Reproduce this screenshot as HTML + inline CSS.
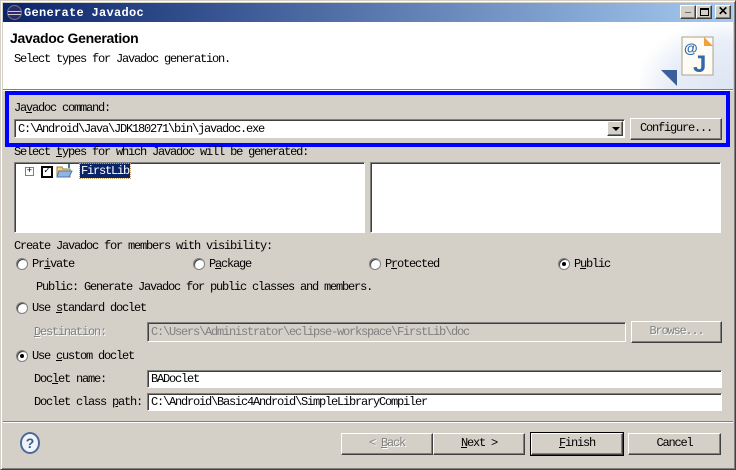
<!DOCTYPE html>
<html><head><style>
*{margin:0;padding:0;box-sizing:border-box}
body{width:736px;height:470px;background:#d4d0c8;position:relative;overflow:hidden;font-family:"Liberation Mono",monospace;font-size:12px;letter-spacing:-1.2px;color:#000}
.a{position:absolute;white-space:nowrap;line-height:14px}
.f{position:absolute;background:#fff;border:1px solid;border-color:#808080 #fff #fff #808080;box-shadow:inset 1px 1px 0 #404040;padding:2px 0 0 3px;line-height:14px;white-space:nowrap}
.b{position:absolute;background:#d4d0c8;border:1px solid;border-color:#fff #404040 #404040 #fff;box-shadow:inset -1px -1px 0 #808080;text-align:center;line-height:19px}
.r{position:absolute;width:12px;height:12px;border-radius:50%;background:#fff;border:1px solid #808080;box-shadow:inset 1px 1px 0 #404040}
.r.on::after{content:"";position:absolute;left:3px;top:3px;width:4px;height:4px;border-radius:50%;background:#000}
u{text-decoration:underline}
</style></head><body>
<div style="position:absolute;left:0;top:0;width:736px;height:470px;border:1px solid;border-color:#d4d0c8 #404040 #404040 #d4d0c8;box-shadow:inset 1px 1px 0 #fff,inset -1px -1px 0 #808080"></div>
<div style="position:absolute;left:3px;top:3px;width:730px;height:19px;background:linear-gradient(90deg,#0a246a,#a6caf0)"></div>
<div style="position:absolute;left:7px;top:5px;width:15px;height:15px;border-radius:50%;background:#2c2c6c;border:1px solid #777"><div style="position:absolute;left:0;top:5px;width:13px;height:1px;background:#ccc"></div><div style="position:absolute;left:0;top:8px;width:13px;height:1px;background:#ccc"></div></div>
<div class="a" style="left:24px;top:6px;color:#fff;font-weight:bold;font-size:12px;letter-spacing:0.3px">Generate Javadoc</div>
<div class="b" style="left:680px;top:5px;width:16px;height:14px;line-height:10px;font-size:10px;letter-spacing:0">_</div>
<div class="b" style="left:696px;top:5px;width:16px;height:14px"><div style="position:absolute;left:3px;top:2px;width:9px;height:8px;border:1px solid #000;border-top-width:2px"></div></div>
<div class="b" style="left:715px;top:5px;width:16px;height:14px;line-height:11px;font-size:12px;font-weight:bold;letter-spacing:0;font-family:'Liberation Sans',sans-serif">✕</div>
<div style="position:absolute;left:3px;top:22px;width:730px;height:67px;background:#fff"></div>
<div style="position:absolute;left:640px;top:22px;width:93px;height:67px;background:radial-gradient(ellipse at 100% 100%,#dde5f3 0,#e9eef8 50%,#fff 75%)"></div>
<div class="a" style="left:10px;top:31px;font-family:'Liberation Sans',sans-serif;font-weight:bold;font-size:14px;letter-spacing:-0.3px">Javadoc Generation</div>
<div class="a" style="left:14px;top:52px">Select types for Javadoc generation.</div>
<svg style="position:absolute;left:660px;top:36px" width="56" height="50"><polygon points="1,34 17,34 17,50" fill="#3a5f9a"/><rect x="22" y="1" width="31" height="38" fill="#fdfbf3" stroke="#a9a48d"/><polygon points="44,1 53,10 44,10" fill="#f0a040"/><text x="24" y="17" font-family="Liberation Sans" font-size="14" font-weight="bold" fill="#2a68b0">@</text><text x="33" y="36" font-family="Liberation Sans" font-size="24" font-weight="bold" fill="#3568a8">J</text></svg>
<div style="position:absolute;left:3px;top:89px;width:730px;height:1px;background:#808080"></div>
<div style="position:absolute;left:3px;top:90px;width:730px;height:1px;background:#fff"></div>
<div style="position:absolute;left:5px;top:91px;width:725px;height:56px;border:4px solid #0000ff"></div>
<div class="a" style="left:14px;top:101px">Ja<u>v</u>adoc command:</div>
<div class="f" style="left:14px;top:119px;width:611px;height:19px">C:\Android\Java\JDK180271\bin\javadoc.exe</div>
<div class="b" style="left:607px;top:121px;width:16px;height:15px"><div style="position:absolute;left:4px;top:5px;border:4px solid transparent;border-top:4px solid #000;border-bottom:0"></div></div>
<div class="b" style="left:630px;top:118px;width:92px;height:22px">Configure...</div>
<div class="a" style="left:14px;top:145px">Select <u>t</u>ypes for which Javadoc will be generated:</div>
<div class="f" style="left:14px;top:162px;width:351px;height:71px"></div>
<div class="f" style="left:370px;top:162px;width:351px;height:71px"></div>
<div style="position:absolute;left:25px;top:167px;width:9px;height:9px;border:1px solid #808080;background:#fff;font-size:9px;line-height:7px;text-align:center;letter-spacing:0">+</div>
<div style="position:absolute;left:41px;top:166px;width:12px;height:12px;border:2px solid #000;background:#fff;font-size:10px;line-height:8px;text-align:center;letter-spacing:0">✓</div>
<svg style="position:absolute;left:56px;top:163px" width="17" height="16"><path d="M1 4h5l1 2h7v8H1z" fill="#f4d27a" stroke="#a08040"/><path d="M3 8h13l-3 6H1z" fill="#8fb5e0" stroke="#4a78b0"/><path d="M13 1v4" stroke="#4a78b0" stroke-width="2"/></svg>
<div class="a" style="left:80px;top:164px;background:#0a246a;color:#fff;outline:1px dotted #c0a060;padding:0 1px">FirstLib</div>
<div class="a" style="left:14px;top:239px">Create Javadoc for members with visibility:</div>
<div class="r" style="left:16px;top:258px"></div><div class="a" style="left:32px;top:257px">Pr<u>i</u>vate</div>
<div class="r" style="left:193px;top:258px"></div><div class="a" style="left:209px;top:257px">P<u>a</u>ckage</div>
<div class="r" style="left:369px;top:258px"></div><div class="a" style="left:385px;top:257px">P<u>r</u>otected</div>
<div class="r on" style="left:558px;top:258px"></div><div class="a" style="left:574px;top:257px">P<u>u</u>blic</div>
<div class="a" style="left:36px;top:280px">Public: Generate Javadoc for public classes and members.</div>
<div class="r" style="left:16px;top:302px"></div><div class="a" style="left:32px;top:301px">Use <u>s</u>tandard doclet</div>
<div class="a" style="left:34px;top:325px;color:#808080;text-shadow:1px 1px 0 #fff"><u>D</u>estination:</div>
<div class="f" style="left:147px;top:322px;width:479px;height:20px;background:#d4d0c8;color:#808080">C:\Users\Administrator\eclipse-workspace\FirstLib\doc</div>
<div class="b" style="left:631px;top:321px;width:91px;height:22px;color:#808080;text-shadow:1px 1px 0 #fff">Browse...</div>
<div class="r on" style="left:16px;top:350px"></div><div class="a" style="left:32px;top:349px">Use <u>c</u>ustom doclet</div>
<div class="a" style="left:34px;top:372px">Doc<u>l</u>et name:</div>
<div class="f" style="left:147px;top:370px;width:575px;height:18px;padding-top:1px">BADoclet</div>
<div class="a" style="left:34px;top:395px">Doclet class <u>p</u>ath:</div>
<div class="f" style="left:147px;top:393px;width:575px;height:18px;padding-top:1px">C:\Android\Basic4Android\SimpleLibraryCompiler</div>
<div style="position:absolute;left:3px;top:421px;width:730px;height:1px;background:#808080"></div>
<div style="position:absolute;left:3px;top:422px;width:730px;height:1px;background:#fff"></div>
<div style="position:absolute;left:20px;top:432px;width:20px;height:22px;border-radius:50%;border:2px solid #4a6a9a;background:#f0f4fa;color:#3a5a8a;font:bold 14px/18px 'Liberation Sans',sans-serif;text-align:center;letter-spacing:0">?</div>
<div class="b" style="left:341px;top:433px;width:92px;height:22px;color:#808080;text-shadow:1px 1px 0 #fff">&lt; <u>B</u>ack</div>
<div class="b" style="left:433px;top:433px;width:92px;height:22px"><u>N</u>ext &gt;</div>
<div class="b" style="left:531px;top:433px;width:92px;height:22px;outline:1px solid #000"><u>F</u>inish</div>
<div class="b" style="left:628px;top:433px;width:93px;height:22px">Cancel</div>
</body></html>
